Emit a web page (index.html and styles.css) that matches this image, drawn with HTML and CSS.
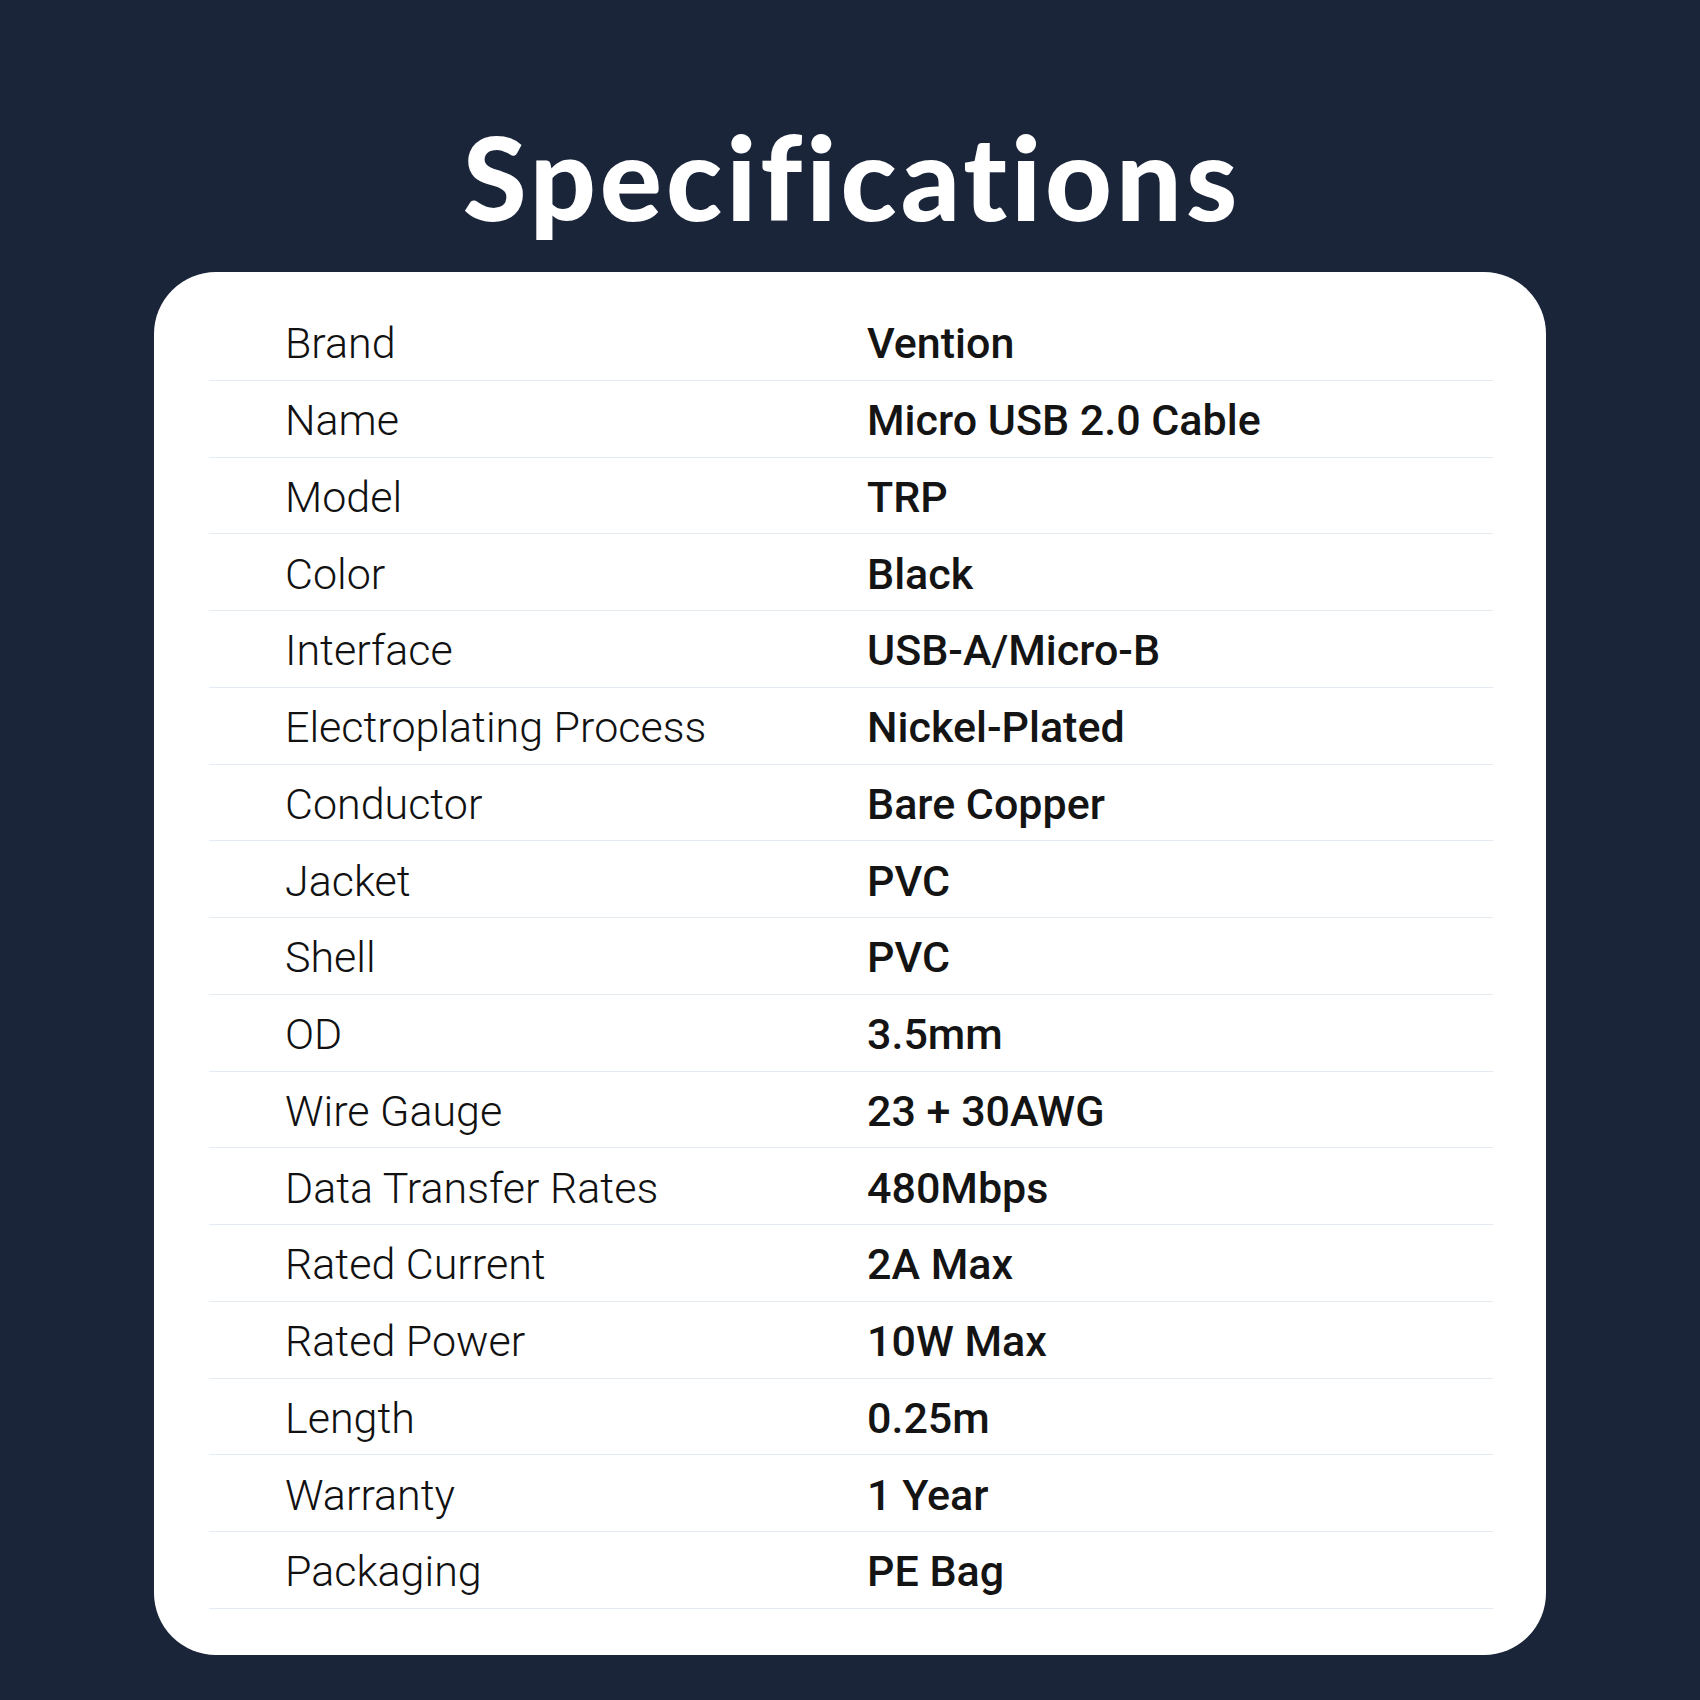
FILE: index.html
```html
<!DOCTYPE html>
<html lang="en">
<head>
<meta charset="utf-8">
<title>Specifications</title>
<link rel="stylesheet" href="styles.css">
</head>
<body>
<main class="page">
  <h1 class="title">Specifications</h1>
  <section class="card">
    <div class="row"><span class="label">Brand</span><span class="value">Vention</span></div>
    <div class="row"><span class="label">Name</span><span class="value">Micro USB 2.0 Cable</span></div>
    <div class="row"><span class="label">Model</span><span class="value">TRP</span></div>
    <div class="row"><span class="label">Color</span><span class="value">Black</span></div>
    <div class="row"><span class="label">Interface</span><span class="value">USB-A/Micro-B</span></div>
    <div class="row"><span class="label">Electroplating Process</span><span class="value">Nickel-Plated</span></div>
    <div class="row"><span class="label">Conductor</span><span class="value">Bare Copper</span></div>
    <div class="row"><span class="label">Jacket</span><span class="value">PVC</span></div>
    <div class="row"><span class="label">Shell</span><span class="value">PVC</span></div>
    <div class="row"><span class="label">OD</span><span class="value">3.5mm</span></div>
    <div class="row"><span class="label">Wire Gauge</span><span class="value">23 + 30AWG</span></div>
    <div class="row"><span class="label">Data Transfer Rates</span><span class="value">480Mbps</span></div>
    <div class="row"><span class="label">Rated Current</span><span class="value">2A Max</span></div>
    <div class="row"><span class="label">Rated Power</span><span class="value">10W Max</span></div>
    <div class="row"><span class="label">Length</span><span class="value">0.25m</span></div>
    <div class="row"><span class="label">Warranty</span><span class="value">1 Year</span></div>
    <div class="row"><span class="label">Packaging</span><span class="value">PE Bag</span></div>
  </section>
</main>
</body>
</html>
```
FILE: styles.css
```css
* { box-sizing: border-box; }
html, body {
  margin: 0;
  padding: 0;
}
body {
  background: #1a253a;
  width: 1700px;
  height: 1700px;
  overflow: hidden;
}
.page {
  display: flex;
  flex-direction: column;
  align-items: center;
  padding-top: 122px;
}
.title {
  margin: 0 0 0 4px;
  font-family: Lato, "Liberation Sans", sans-serif;
  font-weight: 900;
  font-size: 116px;
  line-height: 110px;
  color: #ffffff;
  letter-spacing: 4px;
  font-variant-ligatures: none;
  font-feature-settings: "liga" 0;
}
.card {
  margin-top: 40px;
  width: 1392px;
  background: #ffffff;
  border-radius: 62px;
  padding: 32px 53px 46px 55px;
  display: flex;
  flex-direction: column;
}
.row {
  height: 76.75px;
  border-bottom: 1.5px solid #e4ebf2;
  display: grid;
  grid-template-columns: 582px 1fr;
  align-items: center;
  padding-left: 76px;
  padding-top: 4px;
  font-size: 43px;
  line-height: 1;
  color: #111111;
}
.label {
  font-family: Roboto, "Noto Sans", sans-serif;
  font-weight: 300;
}
.value {
  font-family: Roboto, "Noto Sans", sans-serif;
  font-weight: 500;
  color: #141414;
}
```
